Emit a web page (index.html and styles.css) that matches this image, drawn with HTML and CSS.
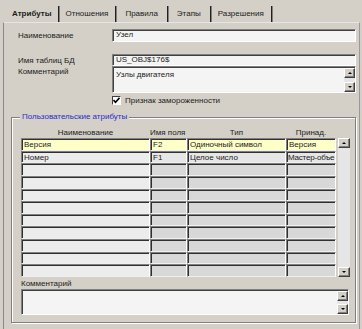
FILE: index.html
```html
<!DOCTYPE html>
<html lang="ru">
<head>
<meta charset="utf-8">
<title>Атрибуты</title>
<link rel="stylesheet" href="styles.css">
</head>
<body>
<div class="tabs">
  <div class="tab active">Атрибуты</div>
  <div class="tab">Отношения</div>
  <div class="tab wide">Правила</div>
  <div class="tab wide">Этапы</div>
  <div class="tab">Разрешения</div>
</div>
<div class="page">
  <div class="row r1"><span class="lbl">Наименование</span><div class="field">Узел</div></div>
  <div class="row r2"><span class="lbl">Имя таблиц БД</span><div class="field">US_OBJ$176$</div></div>
  <div class="row r3"><span class="lbl top">Комментарий</span>
    <div class="field memo">
      <span class="memo-text">Узлы двигателя</span>
      <div class="vscroll">
        <div class="sbtn"><i class="arr up"></i></div>
        <div class="track"></div>
        <div class="sbtn"><i class="arr down"></i></div>
      </div>
    </div>
  </div>
  <div class="row r4"><span></span>
    <div class="check"><span class="box"><svg width="7" height="7" viewBox="0 0 7 7"><polyline points="0.5,3 2.5,5.2 6.5,0.8" fill="none" stroke="#000" stroke-width="1.6"/></svg></span>Признак замороженности</div>
  </div>
  <fieldset class="group">
    <legend>Пользовательские атрибуты</legend>
    <div class="grid-wrap">
      <div class="tbl">
        <div class="th">Наименование</div>
        <div class="th left">Имя поля</div>
        <div class="th">Тип</div>
        <div class="th">Принад.</div>

        <div class="c c1 hl">Версия</div><div class="c c2 hl">F2</div><div class="c c3 hl">Одиночный символ</div><div class="c c4 hl">Версия</div>
        <div class="c c1">Номер</div><div class="c c2 lt">F1</div><div class="c c3 lt">Целое число</div><div class="c c4 lt tight">Мастер-объе</div>
        <div class="c c1"></div><div class="c c2"></div><div class="c c3"></div><div class="c c4"></div>
        <div class="c c1"></div><div class="c c2"></div><div class="c c3"></div><div class="c c4"></div>
        <div class="c c1"></div><div class="c c2"></div><div class="c c3"></div><div class="c c4"></div>
        <div class="c c1"></div><div class="c c2"></div><div class="c c3"></div><div class="c c4"></div>
        <div class="c c1"></div><div class="c c2"></div><div class="c c3"></div><div class="c c4"></div>
        <div class="c c1"></div><div class="c c2"></div><div class="c c3"></div><div class="c c4"></div>
        <div class="c c1"></div><div class="c c2"></div><div class="c c3"></div><div class="c c4"></div>
        <div class="c c1"></div><div class="c c2"></div><div class="c c3"></div><div class="c c4"></div>
        <div class="c c1"></div><div class="c c2"></div><div class="c c3"></div><div class="c c4"></div>
      </div>
      <div class="vscroll tall">
        <div class="sbtn"><i class="arr up"></i></div>
        <div class="track"></div>
        <div class="sbtn"><i class="arr down"></i></div>
      </div>
    </div>
    <div class="cmt-label">Комментарий</div>
    <div class="field memo memo2">
      <span class="memo-text"></span>
      <div class="vscroll">
        <div class="sbtn"><i class="arr up"></i></div>
        <div class="track"></div>
        <div class="sbtn"><i class="arr down"></i></div>
      </div>
    </div>
  </fieldset>
</div>
</body>
</html>
```
FILE: styles.css
```css
* { box-sizing: border-box; }

body {
  margin: 0;
  width: 362px;
  height: 329px;
  overflow: hidden;
  background: #d4d0c8;
  font-family: "Liberation Sans", Arial, sans-serif;
  font-size: 8px;
  color: #1c1c1c;
}

/* ---------- tabs ---------- */
.tabs {
  display: flex;
  height: 16px;
  margin: 6px 0 0 6px;
}
.tab {
  padding: 1px 7px 0;
  line-height: 14px;
  white-space: nowrap;
  border-right: 1px solid #202020;
  box-shadow: 1px 0 0 #808080;
}
.tab.wide { padding: 1px 9px 0; }
.tab.active {
  font-weight: bold;
  padding: 1px 6px 0 6px;
}

/* ---------- page ---------- */
.page {
  margin-left: 3px;
  width: 357px;
  height: 307px;
  border-left: 1px solid #8a8a8a;
  border-top: 1px solid #e6e6e6;
  border-right: 1px solid #9a9a9a;
  padding: 6px 3px 0 7px;
}

.row {
  display: grid;
  grid-template-columns: 94px 1fr;
  padding-left: 7px;
}
.lbl {
  white-space: nowrap;
  align-self: center;
}
.lbl.top { align-self: start; padding-top: 1px; }
.r1 { height: 13px; }
.r2 { height: 12px; margin-top: 12px; }
.r3 { height: 27px; }
.r4 { height: 9px; margin-top: 3px; }

.field {
  background: #f4f4f4;
  border: 1px solid;
  border-color: #808080 #ffffff #ffffff #808080;
  box-shadow: inset 1px 1px 0 #404040;
  padding: 0 0 0 3px;
  line-height: 10px;
  white-space: nowrap;
  overflow: hidden;
}
.memo {
  display: flex;
  padding: 0 0 0 3px;
}
.memo-text {
  flex: 1;
  padding-top: 3px;
}

/* scrollbars */
.vscroll {
  width: 11px;
  display: flex;
  flex-direction: column;
  background: #e6e6e6;
  margin: 1px 0 0 0;
}
.track { flex: 1; }
.sbtn {
  height: 10px;
  background: #d4d0c8;
  border: 1px solid;
  border-color: #ffffff #404040 #404040 #ffffff;
  box-shadow: inset -1px -1px 0 #808080;
  display: flex;
  align-items: center;
  justify-content: center;
}
.arr {
  width: 0;
  height: 0;
  border-left: 2px solid transparent;
  border-right: 2px solid transparent;
}
.arr.up { border-bottom: 2px solid #000; }
.arr.down { border-top: 2px solid #000; }

/* checkbox */
.check {
  display: flex;
  align-items: center;
  gap: 4px;
  white-space: nowrap;
  line-height: 9px;
}
.box {
  width: 9px;
  height: 9px;
  background: #fff;
  border: 1px solid;
  border-color: #404040 #ffffff #ffffff #404040;
  display: flex;
  align-items: center;
  justify-content: center;
}
.box svg { display: block; }

/* ---------- group box ---------- */
.group {
  margin: 7px 0 0 0;
  width: 345px;
  height: 211px;
  border: 1px solid #808080;
  box-shadow: inset 1px 1px 0 #ffffff, 1px 1px 0 #ffffff;
  padding: 0 5px 0 9px;
}
.group legend {
  color: #2a2ac8;
  padding: 0 2px;
  margin-left: -1px;
  line-height: 10px;
  background: #d4d0c8;
  white-space: nowrap;
}

.grid-wrap {
  display: flex;
  gap: 2px;
}
.tbl {
  display: grid;
  grid-template-columns: 129px 37px 99px 50px;
  grid-template-rows: 16px;
  grid-auto-rows: 12.64px;
  width: 315px;
}
.th {
  text-align: center;
  white-space: nowrap;
  line-height: 11px;
  padding-top: 5px;
}
.th.left { text-align: left; }

.c {
  border: 1px solid;
  border-color: #808080 #ffffff #f0f0f0 #808080;
  box-shadow: inset 1px 1px 0 #303030;
  padding: 1px 0 0 2px;
  line-height: 10px;
  white-space: nowrap;
  overflow: hidden;
  background: #d8d8d8;
}
.c1 { background: #ececec; }
.lt { background: #e6e6e6; }
.hl { background: #ffffc8; }
.tight { padding-left: 1px; letter-spacing: -0.2px; }

.vscroll.tall {
  width: 12px;
  margin-top: 16px;
  height: 139px;
}

.cmt-label {
  margin-top: 2px;
  line-height: 10px;
}
.memo2 {
  height: 26px;
  width: 328px;
}
```
